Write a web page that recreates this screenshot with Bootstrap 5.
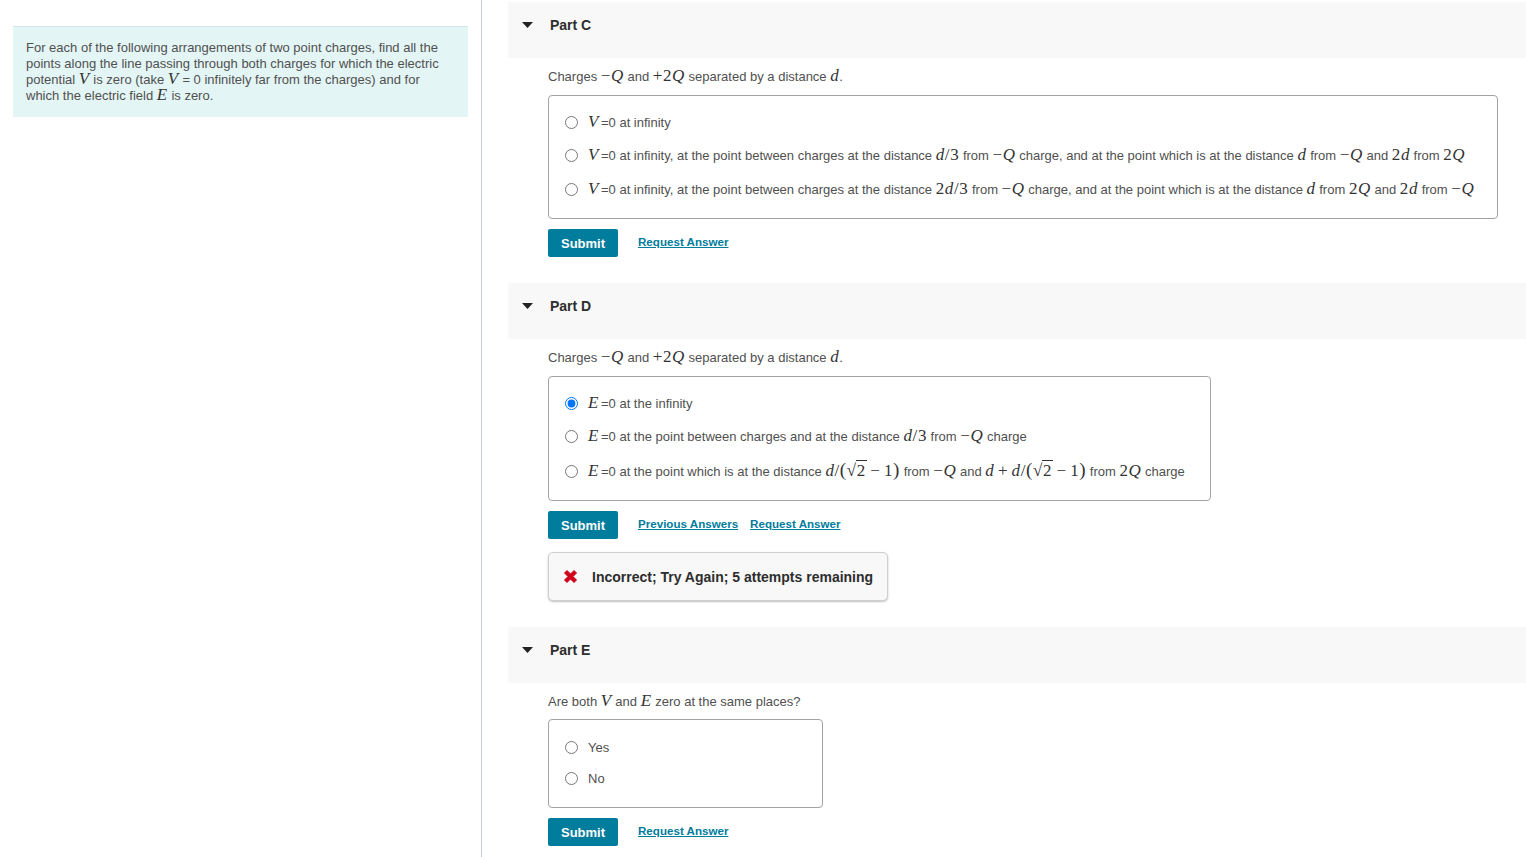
<!DOCTYPE html>
<html lang="en">
<head>
  <meta charset="UTF-8" />
  <meta name="viewport" content="width=device-width, initial-scale=1" />
  <title>Part C, D, E</title>
  <link href="https://cdn.jsdelivr.net/npm/bootstrap@5.3.3/dist/css/bootstrap.min.css" rel="stylesheet" />
  <style>
    html, body { height: 857px; overflow: hidden; }
    body { font-family: "Liberation Sans", Arial, sans-serif; font-size: 13px; line-height: 16px; color: #505050; background: #fff; }
    .left-pane { width: 482px; height: 857px; flex: none; border-right: 1px solid #c3ced4; padding: 26px 13px 0 13px; }
    .intro-box { background: #e4f5f6; border-top: 1px solid #d3e6e8; padding: 13px; width: 455px; height: 91px; }
    .right-pane { flex: 1 1 auto; padding: 2px 0 0 26px; min-width: 0; }
    .part-head { height: 56px; background: #f8f8f8; padding: 15px 0 0 14px; gap: 17px; font-size: 14px; font-weight: 700; color: #2d2d2d; }
    .part-head svg { flex: none; margin-top: 5px; }
    .part-body { padding: 0 0 0 40px; }
    .q-text { height: 37px; padding-top: 11px; white-space: nowrap; }
    .q-short { height: 36px; }
    .opt-box { border: 1px solid #a3a3a3; border-radius: 4px; padding: 12px 16px; }
    .box-c { width: 950px; }
    .box-d { width: 663px; padding-bottom: 10px; }
    .box-e { width: 275px; padding-bottom: 13px; }
    .opt-row { min-height: 31px; gap: 10px; white-space: nowrap; }
    .opt-row.h30 { min-height: 30px; }
    .opt-row.h32 { min-height: 32px; }
    .opt-row.h35 { min-height: 35px; }
    .opt-row.h36 { min-height: 36px; }
    .opt-row .form-check-input { appearance: auto; -webkit-appearance: auto; width: 13px; height: 13px; margin: -1px 0 0; flex: none; border: 0; background: none; box-shadow: none; }
    .action-row { margin-top: 10px; height: 28px; }
    .btn-submit { width: 70px; height: 28px; padding: 1px 0 0; background: #007c9d; border: 0; border-radius: 2px; color: #fff; font-size: 13px; line-height: 16px; font-weight: 700; }
    .ans-link { font-size: 11.6px; font-weight: 700; color: #007c9d; text-decoration: underline; margin-left: 20px; margin-top: -2px; }
    .ans-link + .ans-link { margin-left: 12px; }
    .feedback-box { width: 340px; height: 49px; margin-top: 13px; border: 1px solid #cfcfcf; border-radius: 5px; background: #f8f8f8; box-shadow: 0 1px 2px rgba(0,0,0,.25); padding-left: 14px; gap: 14px; font-size: 14px; font-weight: 700; color: #2d2d2d; white-space: nowrap; }
    .mi, .mr { font-family: "Liberation Serif", "Times New Roman", serif; font-size: 17px; line-height: 0; color: #333; letter-spacing: .6px; }
    .mi { font-style: italic; }
    .lead-var { margin-right: 2px; }
    .bin { margin: 0 3.5px; }
    .paren { font-size: 19px; font-weight: 400; line-height: 0; }
    .rad { border-top: 1px solid #333; padding: 0 1px; margin-left: -1px; }
    .gap-part { margin-top: 26px; }
  </style>
</head>
<body>
  <div class="d-flex">
    <div class="left-pane">
      <div class="intro-box">
        For each of the following arrangements of two point charges, find all the points along the line passing through both charges for which the electric potential <span class="mi">V</span> is zero (take <span class="mi">V</span> = 0 infinitely far from the charges) and for which the electric field <span class="mi">E</span> is zero.
      </div>
    </div>

    <div class="right-pane">
      <!-- Part C -->
      <div class="part-head d-flex align-items-start">
        <svg width="11" height="6" viewBox="0 0 11 6"><path d="M0 0H11L5.5 6Z" fill="#222"/></svg>
        <span>Part C</span>
      </div>
      <div class="part-body">
        <div class="q-text">Charges <span class="mr">−</span><span class="mi">Q</span> and <span class="mr">+2</span><span class="mi">Q</span> separated by a distance <span class="mi">d</span>.</div>
        <div class="opt-box box-c">
          <label class="opt-row h30 d-flex align-items-center"><input class="form-check-input" type="radio" name="pc"><span><span class="mi lead-var">V</span>=0 at infinity</span></label>
          <label class="opt-row h36 d-flex align-items-center"><input class="form-check-input" type="radio" name="pc"><span><span class="mi lead-var">V</span>=0 at infinity, at the point between charges at the distance <span class="mi">d</span><span class="mr">/3</span> from <span class="mr">−</span><span class="mi">Q</span> charge, and at the point which is at the distance <span class="mi">d</span> from <span class="mr">−</span><span class="mi">Q</span> and <span class="mr">2</span><span class="mi">d</span> from <span class="mr">2</span><span class="mi">Q</span></span></label>
          <label class="opt-row h32 d-flex align-items-center"><input class="form-check-input" type="radio" name="pc"><span><span class="mi lead-var">V</span>=0 at infinity, at the point between charges at the distance <span class="mr">2</span><span class="mi">d</span><span class="mr">/3</span> from <span class="mr">−</span><span class="mi">Q</span> charge, and at the point which is at the distance <span class="mi">d</span> from <span class="mr">2</span><span class="mi">Q</span> and <span class="mr">2</span><span class="mi">d</span> from <span class="mr">−</span><span class="mi">Q</span></span></label>
        </div>
        <div class="action-row d-flex align-items-center">
          <button class="btn-submit">Submit</button>
          <a class="ans-link" href="#">Request Answer</a>
        </div>
      </div>

      <!-- Part D -->
      <div class="part-head d-flex align-items-start gap-part">
        <svg width="11" height="6" viewBox="0 0 11 6"><path d="M0 0H11L5.5 6Z" fill="#222"/></svg>
        <span>Part D</span>
      </div>
      <div class="part-body">
        <div class="q-text">Charges <span class="mr">−</span><span class="mi">Q</span> and <span class="mr">+2</span><span class="mi">Q</span> separated by a distance <span class="mi">d</span>.</div>
        <div class="opt-box box-d">
          <label class="opt-row h30 d-flex align-items-center"><input class="form-check-input" type="radio" name="pd" checked><span><span class="mi lead-var">E</span>=0 at the infinity</span></label>
          <label class="opt-row h35 d-flex align-items-center"><input class="form-check-input" type="radio" name="pd"><span><span class="mi lead-var">E</span>=0 at the point between charges and at the distance <span class="mi">d</span><span class="mr">/3</span> from <span class="mr">−</span><span class="mi">Q</span> charge</span></label>
          <label class="opt-row h36 d-flex align-items-center"><input class="form-check-input" type="radio" name="pd"><span><span class="mi lead-var">E</span>=0 at the point which is at the distance <span class="mi">d</span><span class="mr">/<span class="paren">(</span>√<span class="rad">2</span><span class="bin">−</span>1<span class="paren">)</span></span> from <span class="mr">−</span><span class="mi">Q</span> and <span class="mi">d</span><span class="mr bin">+</span><span class="mi">d</span><span class="mr">/<span class="paren">(</span>√<span class="rad">2</span><span class="bin">−</span>1<span class="paren">)</span></span> from <span class="mr">2</span><span class="mi">Q</span> charge</span></label>
        </div>
        <div class="action-row d-flex align-items-center">
          <button class="btn-submit">Submit</button>
          <a class="ans-link" href="#">Previous Answers</a>
          <a class="ans-link" href="#">Request Answer</a>
        </div>
        <div class="feedback-box d-flex align-items-center">
          <svg width="15" height="15" viewBox="0 0 15 15"><path d="M1.5 4 4 1.5 7.5 5 11 1.5 13.5 4 10 7.5 13.5 11 11 13.5 7.5 10 4 13.5 1.5 11 5 7.5Z" fill="#d0021b" stroke="#d0021b" stroke-linejoin="round"/></svg>
          <span>Incorrect; Try Again; 5 attempts remaining</span>
        </div>
      </div>

      <!-- Part E -->
      <div class="part-head d-flex align-items-start gap-part">
        <svg width="11" height="6" viewBox="0 0 11 6"><path d="M0 0H11L5.5 6Z" fill="#222"/></svg>
        <span>Part E</span>
      </div>
      <div class="part-body">
        <div class="q-text q-short">Are both <span class="mi">V</span> and <span class="mi">E</span> zero at the same places?</div>
        <div class="opt-box box-e">
          <label class="opt-row d-flex align-items-center"><input class="form-check-input" type="radio" name="pe"><span>Yes</span></label>
          <label class="opt-row d-flex align-items-center"><input class="form-check-input" type="radio" name="pe"><span>No</span></label>
        </div>
        <div class="action-row d-flex align-items-center">
          <button class="btn-submit">Submit</button>
          <a class="ans-link" href="#">Request Answer</a>
        </div>
      </div>
    </div>
  </div>
  <script src="https://cdn.jsdelivr.net/npm/bootstrap@5.3.3/dist/js/bootstrap.bundle.min.js"></script>
</body>
</html>
